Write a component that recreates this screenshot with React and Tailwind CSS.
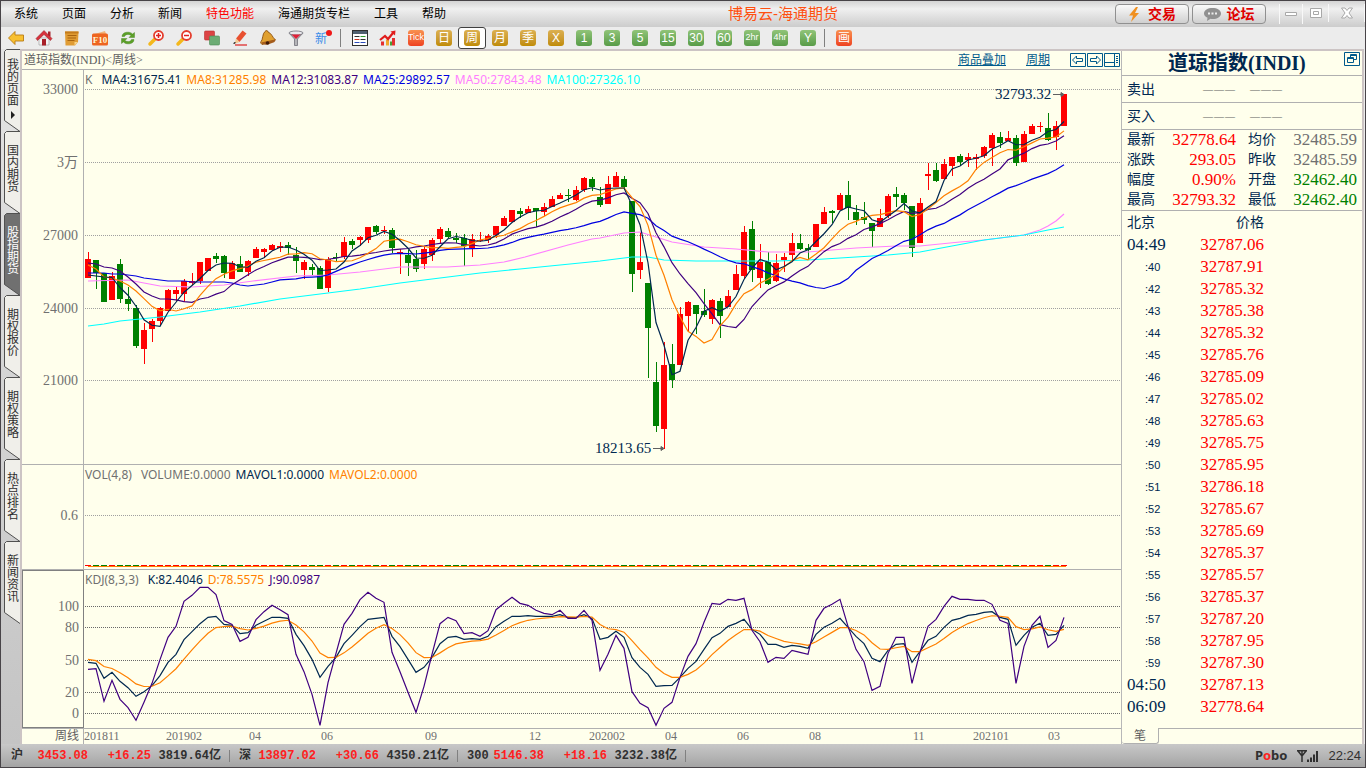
import React, { useState } from "react";

const RED = "#ff0000";
const GREEN = "#008000";
const NAVY = "#002850";

const menus = ["系统", "页面", "分析", "新闻", "特色功能", "海通期货专栏", "工具", "帮助"];

const sideTabs = ["我的页面", "国内期货", "股指期货", "期权报价", "期权策略", "热点排名", "新闻资讯"];

// [direction, high, body top, body bottom, low]
const candles = [
  ["R", 252, 259, 278, 278], ["G", 260, 260, 273, 289], ["G", 273, 273, 302, 302], ["R", 272, 276, 300, 300],
  ["G", 259, 264, 299, 303], ["G", 287, 299, 304, 311], ["G", 305, 308, 346, 348], ["R", 323, 330, 349, 364],
  ["R", 319, 321, 329, 342], ["R", 307, 308, 321, 326], ["R", 289, 290, 311, 311], ["R", 287, 290, 294, 301],
  ["R", 279, 281, 294, 302], ["R", 273, 281, 283, 285], ["R", 262, 262, 281, 284], ["R", 258, 258, 271, 271],
  ["G", 253, 256, 259, 263], ["G", 255, 256, 273, 278], ["R", 261, 263, 279, 279], ["G", 256, 264, 272, 272],
  ["R", 260, 261, 272, 276], ["R", 247, 249, 258, 258], ["R", 248, 249, 252, 258], ["R", 244, 245, 250, 251],
  ["R", 242, 246, 248, 252], ["G", 242, 245, 248, 255], ["G", 247, 255, 261, 273], ["R", 260, 262, 270, 279],
  ["G", 264, 267, 270, 275], ["G", 266, 268, 289, 289], ["R", 257, 259, 288, 292], ["G", 253, 257, 258, 261],
  ["R", 237, 242, 257, 259], ["G", 239, 241, 245, 249], ["R", 236, 237, 240, 246], ["R", 227, 227, 240, 243],
  ["G", 225, 226, 232, 234], ["R", 226, 230, 231, 234], ["G", 228, 230, 248, 253], ["R", 249, 252, 254, 274],
  ["G", 250, 255, 263, 276], ["G", 250, 259, 269, 272], ["R", 246, 249, 264, 269], ["R", 238, 240, 255, 261],
  ["R", 227, 229, 239, 243], ["G", 228, 231, 237, 238], ["G", 233, 238, 240, 243], ["G", 234, 238, 246, 266],
  ["R", 234, 239, 248, 257], ["R", 232, 240, 241, 242], ["R", 234, 236, 240, 243], ["R", 226, 226, 235, 238],
  ["R", 216, 218, 226, 226], ["R", 210, 210, 222, 222], ["G", 208, 211, 214, 218], ["R", 206, 209, 213, 213],
  ["G", 208, 208, 211, 227], ["R", 203, 207, 212, 216], ["R", 196, 199, 207, 207], ["R", 193, 195, 199, 199],
  ["G", 189, 195, 196, 202], ["R", 186, 190, 200, 201], ["R", 177, 178, 190, 192], ["G", 177, 179, 187, 191],
  ["G", 187, 197, 205, 207], ["R", 176, 184, 204, 204], ["R", 172, 176, 187, 187], ["G", 176, 179, 187, 190],
  ["G", 201, 201, 274, 292], ["R", 232, 262, 270, 279], ["G", 283, 283, 328, 378], ["G", 362, 382, 426, 432],
  ["R", 342, 365, 429, 449], ["G", 344, 364, 380, 388], ["R", 307, 314, 365, 365], ["R", 301, 302, 316, 332],
  ["G", 305, 305, 314, 334], ["G", 289, 311, 315, 317], ["R", 299, 300, 319, 324], ["G", 298, 301, 316, 338],
  ["R", 290, 296, 307, 307], ["R", 265, 274, 290, 290], ["R", 226, 232, 276, 279], ["G", 221, 229, 270, 282],
  ["R", 244, 262, 278, 288], ["G", 252, 262, 284, 285], ["R", 254, 263, 281, 282], ["R", 253, 257, 260, 272],
  ["R", 233, 243, 255, 261], ["G", 234, 243, 249, 250], ["G", 244, 248, 250, 259], ["R", 224, 224, 247, 247],
  ["R", 207, 212, 224, 224], ["G", 210, 211, 213, 223], ["R", 193, 195, 210, 210], ["G", 181, 195, 208, 220],
  ["G", 205, 212, 220, 225], ["G", 202, 217, 220, 224], ["G", 223, 223, 231, 247], ["R", 209, 218, 227, 227],
  ["R", 194, 196, 216, 218], ["G", 187, 194, 197, 207], ["G", 193, 195, 203, 210], ["G", 206, 206, 248, 257],
  ["R", 198, 203, 243, 243], ["R", 163, 174, 176, 190], ["G", 163, 170, 181, 182], ["R", 159, 164, 179, 179],
  ["R", 157, 157, 166, 176], ["G", 154, 156, 162, 165], ["R", 153, 157, 160, 167], ["R", 154, 157, 159, 170],
  ["R", 146, 147, 156, 158], ["R", 133, 135, 148, 166], ["G", 132, 137, 143, 148], ["R", 131, 138, 141, 141],
  ["G", 135, 138, 163, 166], ["R", 131, 134, 162, 162], ["R", 124, 126, 134, 134], ["R", 122, 126, 127, 132],
  ["G", 113, 128, 140, 141], ["R", 121, 126, 137, 150], ["R", 94, 94, 126, 126],
];

const ma50 = "88,281 128,280 144,283 160,286 192,287 224,285 253,281 296,276 328,275 360,272 400,267 447,267 480,265 504,262 525,257 568,245 592,239 600,238 624,233 640,232 672,242 704,247 736,249 768,252 808,252 856,248 896,246 920,246 960,242 984,240 1024,235 1040,230 1048,226 1056,221 1064,214";
const ma100 = "88,326 104,324 120,321 160,317 200,312 240,306 280,299 320,294 360,289 400,283 440,278 480,273 520,269 560,265 600,261 632,257 648,257 664,260 696,261 736,261 776,261 808,260 856,257 888,255 920,252 952,246 984,240 1024,235 1048,230 1064,227";

// values before the window is long enough to average
const lead4 = [275, 276, 277];
const lead8 = [265, 269, 277, 278, 281, 285, 291];
const lead12 = [263, 264, 267, 268, 271, 277, 284, 292, 296, 299, 299];
const lead25 = [273, 273, 273, 274, 274, 275, 276, 278, 279, 280, 281, 281, 281, 282, 282, 282, 282, 282, 283, 285, 286, 285, 284, 282];

const kLine = [
  292, 295, 340, 322, 349, 368, 394, 380, 362, 332, 292, 268, 224, 200, 176, 157, 154, 178, 181, 206, 203, 181, 169, 157, 157,
  160, 208, 242, 283, 337, 304, 277, 236, 211, 185, 163, 160, 157, 214, 245, 283, 322, 307, 277, 236, 217, 214, 223, 221, 223,
  214, 185, 169, 154, 154, 152, 154, 154, 154, 149, 158, 158, 149, 160, 223, 217, 199, 217, 278, 307, 328, 364, 362, 361, 337,
  310, 289, 253, 218, 205, 184, 175, 163, 193, 208, 238, 238, 247, 241, 244, 250, 208, 187, 175, 160, 187, 214, 236, 280, 290,
  256, 238, 236, 292, 259, 226, 214, 187, 166, 160, 151, 148, 142, 140, 157, 163, 241, 211, 187, 175, 211, 208, 181,
];
const jLine = [
  313, 311, 409, 346, 403, 428, 466, 412, 355, 284, 217, 184, 109, 91, 67, 67, 89, 167, 178, 229, 217, 164, 140, 121, 134,
  149, 268, 320, 388, 481, 353, 265, 178, 145, 104, 82, 100, 112, 262, 320, 382, 442, 364, 268, 176, 157, 167, 206, 203, 214,
  197, 134, 115, 97, 115, 121, 136, 145, 149, 136, 160, 160, 136, 166, 316, 268, 211, 250, 380, 415, 428, 481, 430, 412, 337,
  274, 236, 172, 115, 118, 103, 106, 100, 196, 230, 292, 277, 280, 256, 262, 268, 166, 130, 118, 103, 184, 253, 290, 376, 364,
  265, 217, 217, 355, 262, 184, 163, 124, 94, 103, 103, 106, 106, 118, 166, 175, 355, 244, 181, 154, 247, 226, 157,
];

const ticks = [
  ["04:49", "32787.06"], [":40", "32787.91"], [":42", "32785.32"], [":43", "32785.38"], [":44", "32785.32"],
  [":45", "32785.76"], [":46", "32785.09"], [":47", "32785.02"], [":48", "32785.63"], [":49", "32785.75"],
  [":50", "32785.95"], [":51", "32786.18"], [":52", "32785.67"], [":53", "32785.69"], [":54", "32785.37"],
  [":55", "32785.57"], [":56", "32785.37"], [":57", "32787.20"], [":58", "32787.95"], [":59", "32787.30"],
  ["04:50", "32787.13"], ["06:09", "32778.64"],
];

const quotes = [
  ["最新", "32778.64", "均价", "32485.59", "text-[#707070]"],
  ["涨跌", "293.05", "昨收", "32485.59", "text-[#707070]"],
  ["幅度", "0.90%", "开盘", "32462.40", "text-[#008000]"],
  ["最高", "32793.32", "最低", "32462.40", "text-[#008000]"],
];

const markets = [
  ["沪", "3453.08", "+16.25", "3819.64亿"],
  ["深", "13897.02", "+30.66", "4350.21亿"],
  ["300", "5146.38", "+18.16", "3232.38亿"],
];

const closes = candles.map((c) => (c[0] === "R" ? c[2] : c[3]));
const xAt = (i) => 88 + i * 8;

function average(n, lead) {
  return closes.map((_, i) => {
    if (i < n - 1) return lead[i];
    return closes.slice(i - n + 1, i + 1).reduce((a, b) => a + b, 0) / n;
  });
}

function smooth(values, seed) {
  let prev = seed;
  return values.map((v, i) => {
    prev = i === 0 ? seed : (prev * 2 + v) / 3;
    return prev;
  });
}

const points = (values, toY = (v) => v) => values.map((v, i) => `${xAt(i)},${toY(v)}`).join(" ");

function Line({ pts, color }) {
  return <polyline points={pts} fill="none" stroke={color} strokeWidth="1.2" />;
}

function Grid({ ys, color }) {
  return ys.map((y) => (
    <line key={y} x1="1" x2="100%" y1={y + 0.5} y2={y + 0.5} stroke={color} strokeDasharray="1 1" />
  ));
}

function Scale({ height, items }) {
  return (
    <svg className="block w-[60px]" height={height}>
      {items.map(([label, y]) => (
        <text key={label} x="56" y={y + 5} textAnchor="end" fill="#707070" className="font-['Liberation_Serif','Noto_Sans_CJK_SC',serif] text-[14px]">{label}</text>
      ))}
    </svg>
  );
}

function Legend({ items }) {
  return (
    <div className="absolute top-0 left-0 flex gap-[5px] pl-px text-[12px] leading-5 whitespace-nowrap font-['Noto_Sans',sans-serif]">
      {items.map(([text, cls]) => <span key={text} className={`first:mr-1 ${cls}`}>{text}</span>)}
    </div>
  );
}

function PriceChart() {
  return (
    <div className="relative flex-1 min-w-0">
      <svg className="block w-full h-[394px]">
        <Grid ys={[19, 92, 165, 238, 310]} color="#a0a0a0" />
        <g transform="translate(-84,-70)">
          {candles.map(([dir, high, top, bottom, low], i) => {
            const fill = dir === "R" ? RED : GREEN;
            return (
              <g key={i} fill={fill}>
                <rect x={xAt(i)} y={high} width="1" height={low - high} />
                <rect x={xAt(i) - 3} y={top} width="6" height={Math.max(bottom - top, 1)} />
              </g>
            );
          })}
          <Line pts={ma50} color="#ff80ff" />
          <Line pts={ma100} color="#00ffff" />
          <Line pts={points(average(25, lead25))} color="#0000e0" />
          <Line pts={points(average(12, lead12))} color="#400080" />
          <Line pts={points(average(8, lead8))} color="#ff8000" />
          <Line pts={points(average(4, lead4))} color={NAVY} />
          <g fill={NAVY} className="font-['Liberation_Serif',serif] text-[15px]">
            <text x="995" y="99">32793.32</text>
            <text x="595" y="453">18213.65</text>
          </g>
          <g stroke="#606060" fill="#606060">
            <path d="M1053 94.5h10M1061 92.5l3 2-3 2z" />
            <path d="M653 448.5h10M661 446.5l3 2-3 2z" />
          </g>
        </g>
      </svg>
      <Legend
        items={[
          ["K", "text-[#707070]"],
          ["MA4:31675.41", "text-[#002850]"],
          ["MA8:31285.98", "text-[#ff8000]"],
          ["MA12:31083.87", "text-[#400080]"],
          ["MA25:29892.57", "text-[#0000e0]"],
          ["MA50:27843.48", "text-[#ff80ff]"],
          ["MA100:27326.10", "text-[#00ffff]"],
        ]}
      />
    </div>
  );
}

function VolumeChart() {
  return (
    <div className="relative flex-1 min-w-0">
      <svg className="block w-full h-[104px]">
        <Grid ys={[50]} color="#a0a0a0" />
        <rect x="4" y="101" width="978" height="1" fill="#ff8000" />
        {candles.map(([dir], i) => (
          <rect key={i} x={xAt(i) - 87} y="100" width="6" height="1" fill={dir === "R" ? RED : GREEN} />
        ))}
      </svg>
      <Legend
        items={[
          ["VOL(4,8)", "text-[#707070]"],
          ["VOLUME:0.0000", "text-[#707070]"],
          ["MAVOL1:0.0000", "text-[#002850]"],
          ["MAVOL2:0.0000", "text-[#ff8000]"],
        ]}
      />
    </div>
  );
}

function KdjChart() {
  const toY = (v) => v / 3 - 5;
  return (
    <div className="relative flex-1 min-w-0">
      <svg className="block w-full h-[158px]">
        <Grid ys={[36, 57, 90, 122, 143]} color="#686868" />
        <g transform="translate(-84,0)">
          <Line pts={points(kLine, toY)} color={NAVY} />
          <Line pts={points(smooth(kLine, 283), toY)} color="#ff8000" />
          <Line pts={points(jLine, toY)} color="#400080" />
        </g>
      </svg>
      <Legend
        items={[
          ["KDJ(8,3,3)", "text-[#707070]"],
          ["K:82.4046", "text-[#002850]"],
          ["D:78.5575", "text-[#ff8000]"],
          ["J:90.0987", "text-[#400080]"],
        ]}
      />
    </div>
  );
}

function DateAxis() {
  const dates = [
    ["201811", 0], ["201902", 82], ["04", 165], ["06", 237], ["09", 341], ["12", 445], ["202002", 505],
    ["04", 581], ["06", 653], ["08", 725], ["11", 829], ["202101", 889], ["03", 964],
  ];
  return (
    <svg className="block flex-1 min-w-0 h-[15px]">
      {dates.map(([label, x]) => (
        <text key={x} x={x} y="11" fill="#707070" className="font-['Liberation_Serif',serif] text-[12px]">{label}</text>
      ))}
    </svg>
  );
}

// toolbar drawings, 16x16
const icons = {
  后退: (
    <path d="M0.5 8L7 1.500V5H15.500V11H7V14.500Z" fill="#f8c030" stroke="#b87c14" strokeWidth=".9" />
  ),
  首页: (
    <>
      <path d="M3 8h10v7H3z" fill="#f4f4f4" stroke="#999" strokeWidth=".6" />
      <path d="M12 1.500h2.500v5H12z" fill="#a8242c" />
      <path d="M0 8.500L8 0.500l8 8-1.500 2L8 4.500 1.500 10.500z" fill="#d8323c" stroke="#8c1c24" strokeWidth=".5" />
      <path d="M6 9h4v6.500H6z" fill="#a82028" />
    </>
  ),
  便签: (
    <>
      <path d="M1 1.500h13.500l-.5 10.500-3 3.500H1.500z" fill="#e09c34" />
      <path d="M1 1.500h13.500v2H1z" fill="#c47c1c" />
      <path d="M3.500 5.500h9M3.500 8h8.500M3.500 10.500h7" stroke="#a86410" fill="none" />
      <path d="M14 12h-3.500v3.500z" fill="#f8d488" />
    </>
  ),
  F10: (
    <>
      <path d="M1 4.500l12-3.500 1.500 4z" fill="#f0b47c" />
      <rect x="0" y="3.500" width="16" height="12" rx="1.500" fill="#ee6420" />
      <text x="8" y="12.500" textAnchor="middle" fill="#fff4d0" fontSize="9" fontWeight="700" fontFamily="Liberation Serif">F10</text>
    </>
  ),
  刷新: (
    <g fill="#5ca028" stroke="#3c7c18" strokeWidth=".4">
      <path d="M2 6.500C2 1.500 10 1 12.500 4L14.500 2.500V7.500H9l2-2C9 3.800 5.500 4 4.500 6.500z" />
      <path d="M14 9.500C14 14.500 6 15 3.500 12L1.500 13.500V8.500H7l-2 2c2 1.700 5.500 1.500 6.500-1z" />
    </g>
  ),
  放大: (
    <>
      <path d="M6.500 9.500L2 14" stroke="#f4b81c" strokeWidth="3.500" strokeLinecap="round" />
      <circle cx="10.500" cy="5.500" r="4.500" fill="#fff" stroke="#e43c2c" strokeWidth="1.800" />
      <path d="M8 5.500h5M10.500 3v5" stroke="#e02020" strokeWidth="1.500" />
    </>
  ),
  缩小: (
    <>
      <path d="M6.500 9.500L2 14" stroke="#f4b81c" strokeWidth="3.500" strokeLinecap="round" />
      <circle cx="10.500" cy="5.500" r="4.500" fill="#fff" stroke="#e43c2c" strokeWidth="1.800" />
      <path d="M8 5.500h5" stroke="#e02020" strokeWidth="1.500" />
    </>
  ),
  叠加: (
    <>
      <rect x="0.500" y="1" width="10" height="9" rx="1" fill="#dc4444" stroke="#b83030" strokeWidth=".6" />
      <rect x="5.500" y="6" width="10" height="9" rx="1" fill="#6cac74" stroke="#4c8c54" strokeWidth=".6" />
    </>
  ),
  画线: (
    <>
      <path d="M4 8.500l6.500-8 4 3L7.500 12z" fill="#e85030" />
      <path d="M4 8.500L7.500 12l-5 2z" fill="#f4c890" />
      <path d="M1 13.500l1.500.5L4 12.500 2.500 12z" fill="#333" />
      <path d="M3 15h12" stroke="#e04848" strokeWidth="1.500" />
    </>
  ),
  预警: (
    <>
      <path d="M5 1.500c1-1.500 3-1 3 .5 4 1.500 4 5 7.500 8L2 14.500c-1-1-1.500-2-1.500-2C3.500 9 2 4 5 1.500z" fill="#e0a030" stroke="#8c5010" strokeWidth=".9" />
      <path d="M1 12.500l14-3c1 2-1 3-3 3.500-3 1.500-9 3-11-.5z" fill="#a45c1c" />
      <circle cx="7.500" cy="13" r="1.800" fill="#401c08" />
    </>
  ),
  过滤: (
    <>
      <path d="M1 3L6.500 9v6.500h3V9L15 3z" fill="#b4b4b8" stroke="#707078" strokeWidth=".8" />
      <ellipse cx="8" cy="3" rx="7" ry="2" fill="#e8e8ec" stroke="#707078" strokeWidth=".8" />
      <path d="M3.500 4.500h9L8 9z" fill="#e02038" />
    </>
  ),
  新: (
    <>
      <text x="-1" y="12.500" fill="#3c8ce8" fontSize="12" fontFamily="Noto Sans CJK SC">新</text>
      <circle cx="13" cy="3" r="3" fill="#f01818" />
    </>
  ),
  报价: (
    <>
      <rect x="0.500" y="0.500" width="15" height="15" fill="#fff" stroke="#303030" />
      <path d="M1 2.500h14" stroke="#506070" strokeWidth="3" />
      <path d="M2.500 6.500h5" stroke="#303030" />
      <path d="M8.500 6.500h5" stroke="#2c9c2c" />
      <path d="M2.500 9.500h5" stroke="#d03020" />
      <path d="M8.500 9.500h5" stroke="#303030" />
      <path d="M2.500 12.500h5M8.500 12.500h5" stroke="#2c4cbc" />
    </>
  ),
  走势: (
    <>
      <path d="M1 15.500v-4h3v4zM12 15.500V8h3v7.500z" fill="#e43030" />
      <path d="M6 15.500v-6h3v6z" fill="#f0a82c" />
      <path d="M10 15.500v-4h2v4z" fill="#4c9c34" />
      <path d="M0 10l5-4 3 3 5-6" stroke="#e01c1c" strokeWidth="2.200" fill="none" />
      <path d="M10.500 1.500l5-1-.5 5z" fill="#e01c1c" />
    </>
  ),
};

const tools1 = ["后退", "首页", "便签", "F10", "刷新", "放大", "缩小", "叠加", "画线", "预警", "过滤", "新"];
const tools2 = ["报价", "走势"];
const periods = ["Tick", "日", "周", "月", "季", "X", "1", "3", "5", "15", "30", "60", "2hr", "4hr", "Y"];

const tileColor = (name) => {
  if (name === "Tick" || name === "画") return "bg-linear-to-b from-[#f89050] to-[#ee4020]";
  if (["日", "周", "月", "季", "X"].includes(name)) return "bg-linear-to-b from-[#dcb050] to-[#c08c00]";
  return "bg-linear-to-b from-[#90c478] to-[#589c48]";
};

function Tile({ name, active, onClick }) {
  return (
    <button
      type="button"
      onClick={onClick}
      className={`flex h-[22px] w-7 items-center justify-center rounded-[3px] border ${active ? "border-[#404040] bg-white" : "border-transparent"}`}
    >
      <span className={`flex size-4 items-center justify-center overflow-hidden rounded-[3px] text-white ${name.length > 2 ? "text-[9px]" : "text-[12px]"} ${tileColor(name)}`}>{name}</span>
    </button>
  );
}

function Tool({ name }) {
  return (
    <button type="button" aria-label={name} className="flex h-[22px] w-7 items-center justify-center">
      <svg className="size-4 overflow-visible" viewBox="0 0 16 16" fill="none">{icons[name]}</svg>
    </button>
  );
}

function Divider() {
  return <div className="flex h-[22px] w-2 justify-center py-0.5"><div className="mr-1 w-px bg-[#808080]" /></div>;
}

function TitleBar() {
  return (
    <header className="flex h-[26px] items-center justify-between bg-linear-to-b from-[#d4d4d4] via-[#f0f0f0] via-30% to-[#cccccc] pl-[13px]">
      <nav className="flex flex-1 gap-6 text-[12px] whitespace-nowrap text-black">
        {menus.map((m) => (
          <button type="button" key={m} className={m === "特色功能" ? "text-[#ff0000]" : ""}>{m}</button>
        ))}
      </nav>
      <h1 className="text-[15px] leading-5 whitespace-nowrap text-[#ff5010]">博易云-海通期货</h1>
      <div className="flex w-[527px] items-center justify-end gap-[3px] text-[14px] font-bold text-[#e00000]">
        <button type="button" className="flex h-5 w-[74px] items-center justify-center gap-2 rounded-[4px] border border-[#909090] bg-linear-to-b from-[#fafafa] to-[#d0d0d0]">
          <svg className="h-[15px] w-3" viewBox="0 0 12 15"><path d="M8 0L1 8.500h4L3 15l8-9H7L10 0z" fill="#f09020" /></svg>
          交易
        </button>
        <button type="button" className="flex h-5 w-[74px] items-center justify-center gap-1.5 rounded-[4px] border border-[#909090] bg-linear-to-b from-[#fafafa] to-[#d0d0d0]">
          <svg className="h-[13px] w-[17px]" viewBox="0 0 17 13">
            <path d="M8.500 0C13 0 17 2 17 5.500S13 11 9 11c-1 0-2 0-2.500-.2L3 13l.5-3.200C1.500 9 0 7.500 0 5.500 0 2 4 0 8.500 0z" fill="#909090" />
            <path d="M4 4.500h2v2H4zM7.500 4.500h2v2h-2zM11 4.500h2v2h-2z" fill="#eee" />
          </svg>
          论坛
        </button>
        <div className="flex self-start pl-2.5">
          <button type="button" aria-label="最小化" className="flex h-5 w-6 items-center justify-center border-x border-[#f8f8f8]">
            <svg className="size-3" viewBox="0 0 12 12"><path d="M.5 4.500h11v3H.5z" fill="#fff" stroke="#a8a8a8" /></svg>
          </button>
          <button type="button" aria-label="最大化" className="flex h-[18px] w-[26px] items-center justify-center border-r border-[#f8f8f8]">
            <svg className="size-3" viewBox="0 0 12 12"><path d="M.5 1.500h11v9H.5zM3.500 4.500h5v3h-5z" fill="#fff" stroke="#a8a8a8" /></svg>
          </button>
          <button type="button" aria-label="关闭" className="flex h-[18px] w-9 items-center justify-center border-r border-[#f8f8f8]">
            <svg className="size-3" viewBox="0 0 12 12"><path d="M.5 1h3.500l2 2.500L8 1h3.500L8 6l3.500 5H8L6 8.500 4 11H.5L4 6z" fill="#fff" stroke="#a8a8a8" /></svg>
          </button>
        </div>
      </div>
    </header>
  );
}

function SideTab({ label, active, onClick }) {
  const hasArrow = label === "我的页面";
  return (
    <button
      type="button"
      onClick={onClick}
      className={`relative h-[82px] w-4 shrink-0 text-[12px] ${active ? "text-white" : "text-[#303030]"}`}
    >
      <svg className="absolute inset-0 h-full w-full overflow-visible" viewBox="0 0 16 82">
        <path d="M16 0.500H2.500L0.500 2.500V71.500L16 82.500" fill={active ? "#707070" : "#f0efea"} stroke="#505050" />
      </svg>
      <span className={`relative flex h-full flex-col items-center pl-0.5 ${hasArrow ? "pt-2.5" : "pt-[14px]"}`}>
        {label.split("").map((ch) => <span key={ch} className="h-3 leading-3">{ch}</span>)}
        {hasArrow && <svg className="mt-1 h-2 w-1" viewBox="0 0 4 8"><path d="M0 0l4 4-4 4z" fill="#202020" /></svg>}
      </span>
    </button>
  );
}

function QuotePanel() {
  const dashes = (
    <span className="flex gap-[15px] text-[10px] text-[#606060]">
      {[0, 1].map((n) => (
        <span key={n} className="flex gap-px"><span>—</span><span>—</span><span>—</span></span>
      ))}
    </span>
  );
  return (
    <aside className="flex w-[241px] shrink-0 flex-col border-l border-[#b8b8b8] font-['Liberation_Serif','Noto_Sans_CJK_SC',serif] text-[14px] text-[#002850]">
      <div className="flex h-[25px] items-start justify-between border-b border-[#b0b0b0] pr-0.5 pl-[46px]">
        <h2 className="text-[20px] leading-6 font-bold">道琼指数(INDI)</h2>
        <button type="button" aria-label="还原" className="mt-px">
          <svg className="h-[14px] w-4" viewBox="0 0 16 14" fill="none" stroke="#005a8c">
            <path d="M.5.5h15v13H.5zM6.500 5.500v-3h6v5h-3M6.500 3.500h6M3.500 5.500h6v5h-6zM3.500 6.500h6" />
          </svg>
        </button>
      </div>
      {["卖出", "买入"].map((label) => (
        <div key={label} className="flex h-[27px] items-center gap-12 border-b border-[#b0b0b0] pl-[5px]">
          <span>{label}</span>
          {dashes}
        </div>
      ))}
      <div className="border-b border-[#b0b0b0]">
        <table className="w-full table-fixed">
          <tbody>
            {quotes.map(([a, av, b, bv, cls]) => (
              <tr key={a} className="h-5 leading-5">
                <th scope="row" className="w-[34px] pl-[5px] text-left font-normal">{a}</th>
                <td className="w-20 text-right text-[17px] text-[#ff0000]">{av}</td>
                <th scope="row" className="w-11 pl-3 text-left font-normal">{b}</th>
                <td className={`pr-[5px] text-right text-[17px] ${cls}`}>{bv}</td>
              </tr>
            ))}
          </tbody>
        </table>
      </div>
      <table className="w-[142px] border-separate border-spacing-0">
        <thead>
          <tr className="h-[23px]">
            <th className="pl-[5px] text-left font-normal">北京</th>
            <th className="text-right font-normal">价格</th>
          </tr>
        </thead>
        <tbody>
          {ticks.map(([t, price]) => (
            <tr key={t} className="h-[22px] leading-[22px]">
              {t.length > 3
                ? <td className="pl-[5px] text-[17px]">{t}</td>
                : <td className="pl-[23px] font-['Liberation_Sans',sans-serif] text-[11px]">{t}</td>}
              <td className="text-right text-[17px] text-[#ff0000]">{price}</td>
            </tr>
          ))}
        </tbody>
      </table>
      <div className="mt-auto flex h-4">
        <button type="button" className="h-4 w-[37px] rounded-b-[3px] border-r border-b border-[#b0b0b0] text-[12px] leading-4 text-[#606060]">笔</button>
        <div className="flex-1 border-t border-[#b0b0b0]" />
      </div>
    </aside>
  );
}

function StatusBar() {
  return (
    <footer className="flex h-[23px] items-center justify-between bg-linear-to-b from-[#c8c8c8] to-[#a4a4a4] pr-1 pl-px text-[12px] text-[#303030]">
      <div className="flex font-['Liberation_Mono','Noto_Sans_CJK_SC',monospace] font-bold whitespace-nowrap">
        {markets.map(([name, value, change, amount]) => (
          <div key={name} className="flex w-[228px] items-center">
            <span className="w-7 pl-[9px]">{name}</span>
            <span className="w-[58px] text-right text-[#ff2020]">{value}</span>
            <span className="w-[63px] text-right text-[#ff2020]">{change}</span>
            <span className="w-[70px] text-right">{amount}</span>
            <span className="ml-auto h-3 w-px bg-[#808080]" />
          </div>
        ))}
      </div>
      <div className="flex items-center gap-2.5">
        <span className="font-['Noto_Sans',sans-serif] text-[13px] font-bold">P<span className="text-[#ff2020]">o</span>bo</span>
        <svg className="h-3 w-[21px]" viewBox="0 0 21 12" fill="none" stroke="#303030">
          <path d="M0 .8h10M5 1v11M1 1l4 5 4-5" strokeWidth="1.500" />
          <path d="M11 9.500v2.500M14 7.500V12M17 4.500V12M20 1V12" strokeWidth="2" />
        </svg>
        <span className="font-['Liberation_Sans',sans-serif] text-[13px]">22:24</span>
      </div>
    </footer>
  );
}

export default function App() {
  const [tab, setTab] = useState("股指期货");
  const [period, setPeriod] = useState("周");

  return (
    <div className="flex min-h-screen flex-col border border-[#484448] bg-[#ececec] font-['Liberation_Sans','Noto_Sans_CJK_SC',sans-serif]">
      <TitleBar />
      <div className="flex h-[22px] pl-px">
        {tools1.map((name) => <Tool key={name} name={name} />)}
        <Divider />
        {tools2.map((name) => <Tool key={name} name={name} />)}
        {periods.map((name) => (
          <Tile key={name} name={name} active={name === period} onClick={() => setPeriod(name)} />
        ))}
        <Divider />
        <Tile name="画" />
      </div>

      <div className="flex flex-1 pr-px">
        <nav className="flex w-[19px] shrink-0 flex-col bg-linear-to-b from-[#e4e4e4] to-[#c4c4c4] pl-[3px]">
          {sideTabs.map((label) => (
            <SideTab key={label} label={label} active={label === tab} onClick={() => setTab(label)} />
          ))}
        </nav>

        <main className="flex min-w-0 flex-1 border-t-2 border-r-2 border-l-2 border-[#ccc4c4] bg-[#ffffec]">
          <section className="flex min-w-0 flex-1 flex-col">
            <div className="flex h-[19px] items-center border-b border-[#b0b0b0] pl-0.5 text-[12px]">
              <span className="flex-1 font-['Liberation_Serif','Noto_Sans_CJK_SC',serif] text-[#606060]">道琼指数(INDI)&lt;周线&gt;</span>
              <a href="#overlay" className="mr-5 text-[#005a8c] underline">商品叠加</a>
              <a href="#period" className="mr-5 text-[#005a8c] underline">周期</a>
              <div className="flex gap-px pr-px">
                <button type="button" aria-label="上一个">
                  <svg className="block h-[14px] w-4" viewBox="0 0 16 14" fill="none" stroke="#005a8c"><path d="M.5.5h15v13H.5zM2.500 7l4-4v2.500h6v3h-6V11z" /></svg>
                </button>
                <button type="button" aria-label="下一个">
                  <svg className="block h-[14px] w-4" viewBox="0 0 16 14" fill="none" stroke="#005a8c"><path d="M.5.5h15v13H.5zM13.500 7l-4-4v2.500h-6v3h6V11z" /></svg>
                </button>
                <button type="button" aria-label="布局">
                  <svg className="block h-[14px] w-4" viewBox="0 0 16 14" fill="none" stroke="#005a8c"><path d="M.5.5h15v13H.5zM10.500.5v13M.5 9.500h10M12 3.500h2M12 5.500h2M12 7.500h2M12 9.500h2" /></svg>
                </button>
              </div>
            </div>

            <div className="flex border-b border-[#b0b0b0]">
              <div className="w-[62px] border-r border-[#b0b0b0]">
                <Scale height={394} items={[["33000", 19], ["3万", 92], ["27000", 165], ["24000", 238], ["21000", 310]]} />
              </div>
              <PriceChart />
            </div>
            <div className="flex border-b border-[#b0b0b0]">
              <div className="w-[62px] border-r border-[#b0b0b0]">
                <Scale height={104} items={[["0.6", 50]]} />
              </div>
              <VolumeChart />
            </div>
            <div className="flex border-b border-[#b0b0b0]">
              <div className="w-[62px] border border-[#808080]">
                <Scale height={156} items={[["100", 35], ["80", 56], ["50", 89], ["20", 121], ["0", 142]]} />
              </div>
              <KdjChart />
            </div>
            <div className="flex h-[15px]">
              <div className="w-[62px] border-r border-[#b0b0b0] pr-1 text-right text-[12px] leading-[15px] text-[#606060]">周线</div>
              <DateAxis />
            </div>
          </section>
          <QuotePanel />
        </main>
      </div>
      <StatusBar />
    </div>
  );
}
